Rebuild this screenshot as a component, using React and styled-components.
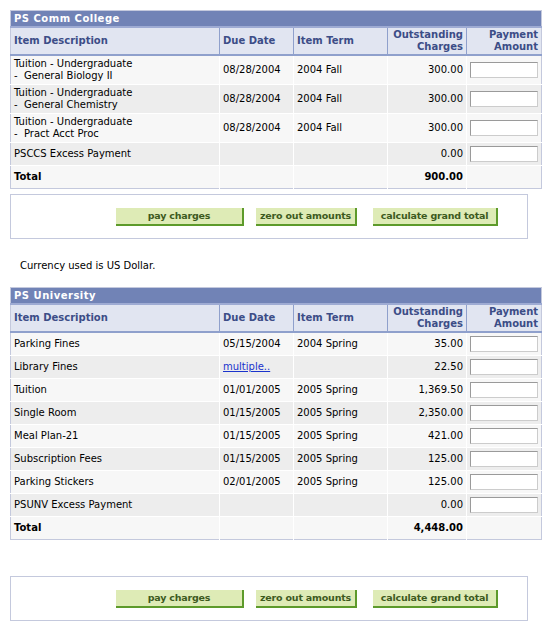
import styled, { createGlobalStyle } from "styled-components";

const Global = createGlobalStyle`
  body { margin: 0; background: #fff; font-family: "DejaVu Sans", Verdana, sans-serif; font-size: 10px; color: #000; }
`;

const Page = styled.div`
  padding: 10px 10px 0 10px;
  width: 531px;
`;

const Grid = styled.table`
  width: 531px;
  border-collapse: collapse;
  border: 1px solid #c4c9dd;
  table-layout: fixed;
`;

const Bar = styled.th`
  background: #7183b6;
  color: #fff;
  text-align: left;
  font-weight: bold;
  font-size: 10px;
  letter-spacing: 0.5px;
  height: 15px;
  padding: 0 3px;
  border-bottom: 2px solid #9eabd3;
`;

const Head = styled.th`
  background: #e1e5f1;
  color: #3c4d87;
  font-weight: bold;
  font-size: 10px;
  text-align: ${(p) => (p.$right ? "right" : "left")};
  padding: 1px 3px;
  height: 22px;
  line-height: 12px;
  border-left: 1px solid #8fa0cc;
  border-bottom: 2px solid #8fa0cc;
  &:first-child { border-left: none; }
`;

const Row = styled.tr`
  background: ${(p) => (p.$alt ? "#ededed" : "#f7f7f7")};
`;

const Cell = styled.td`
  padding: 1px 3px;
  height: ${(p) => p.$h || 20}px;
  line-height: 12px;
  text-align: ${(p) => (p.$right ? "right" : "left")};
  font-weight: ${(p) => (p.$bold ? "bold" : "normal")};
  border-left: 1px solid #fff;
  border-top: 1px solid #fff;
  white-space: pre;
  &:first-child { border-left: none; }
`;

const Link = styled.a`
  color: #1a33cc;
  text-decoration: underline;
`;

const Input = styled.input`
  width: 64px;
  height: 14px;
  border: 1px solid #9a9a9a;
  border-right-color: #ccc;
  border-bottom-color: #ccc;
  padding: 0 1px;
  display: block;
`;

const ButtonBox = styled.div`
  width: 518px;
  height: 45px;
  border: 1px solid #c4c9dd;
  display: flex;
  align-items: center;
  padding-left: 105px;
  box-sizing: border-box;
  gap: 12px;
  margin-top: ${(p) => p.$top}px;
`;

const Btn = styled.button`
  width: ${(p) => p.$w}px;
  height: 18px;
  background: #deebb6;
  border: none;
  border-right: 2px solid #5d9a2b;
  border-bottom: 2px solid #5d9a2b;
  color: #3d5a1e;
  font-family: "DejaVu Sans", Verdana, sans-serif;
  font-size: 9.5px;
  font-weight: bold;
  white-space: nowrap;
  letter-spacing: -0.2px;
  padding: 0;
  margin-right: ${(p) => p.$mr || 0}px;
`;

const Note = styled.div`
  margin: 21px 0 13px 10px;
  height: 14px;
`;

const cols = [209, 74, 94, 79, 75];

function Section({ title, rows, total }) {
  return (
    <Grid>
      <colgroup>{cols.map((w, i) => <col key={i} style={{ width: w }} />)}</colgroup>
      <thead>
        <tr><Bar colSpan={5}>{title}</Bar></tr>
        <tr>
          <Head>Item Description</Head>
          <Head>Due Date</Head>
          <Head>Item Term</Head>
          <Head $right>Outstanding<br />Charges</Head>
          <Head $right>Payment<br />Amount</Head>
        </tr>
      </thead>
      <tbody>
        {rows.map((r, i) => (
          <Row key={i} $alt={i % 2 === 1}>
            <Cell $h={r[0].includes("\n") ? 26 : 20}>{r[0]}</Cell>
            <Cell>{r[4] ? <Link>{r[1]}</Link> : r[1]}</Cell>
            <Cell>{r[2]}</Cell>
            <Cell $right>{r[3]}</Cell>
            <Cell><Input /></Cell>
          </Row>
        ))}
        <Row $alt={rows.length % 2 === 1}>
          <Cell $bold $h={18}>Total</Cell>
          <Cell />
          <Cell />
          <Cell $right $bold>{total}</Cell>
          <Cell />
        </Row>
      </tbody>
    </Grid>
  );
}

function Buttons({ top }) {
  return (
    <ButtonBox $top={top}>
      <Btn $w={128}>pay charges</Btn>
      <Btn $w={101} $mr={4}>zero out amounts</Btn>
      <Btn $w={125}>calculate grand total</Btn>
    </ButtonBox>
  );
}

const college = [
  ["Tuition - Undergraduate\n-  General Biology II", "08/28/2004", "2004 Fall", "300.00"],
  ["Tuition - Undergraduate\n-  General Chemistry", "08/28/2004", "2004 Fall", "300.00"],
  ["Tuition - Undergraduate\n-  Pract Acct Proc", "08/28/2004", "2004 Fall", "300.00"],
  ["PSCCS Excess Payment", "", "", "0.00"],
];

const univ = [
  ["Parking Fines", "05/15/2004", "2004 Spring", "35.00"],
  ["Library Fines", "multiple..", "", "22.50", true],
  ["Tuition", "01/01/2005", "2005 Spring", "1,369.50"],
  ["Single Room", "01/15/2005", "2005 Spring", "2,350.00"],
  ["Meal Plan-21", "01/15/2005", "2005 Spring", "421.00"],
  ["Subscription Fees", "01/15/2005", "2005 Spring", "125.00"],
  ["Parking Stickers", "02/01/2005", "2005 Spring", "125.00"],
  ["PSUNV Excess Payment", "", "", "0.00"],
];

export default function App() {
  return (
    <Page>
      <Global />
      <Section title="PS Comm College" rows={college} total="900.00" />
      <Buttons top={5} />
      <Note>Currency used is US Dollar.</Note>
      <Section title="PS University" rows={univ} total="4,448.00" />
      <Buttons top={36} />
    </Page>
  );
}
